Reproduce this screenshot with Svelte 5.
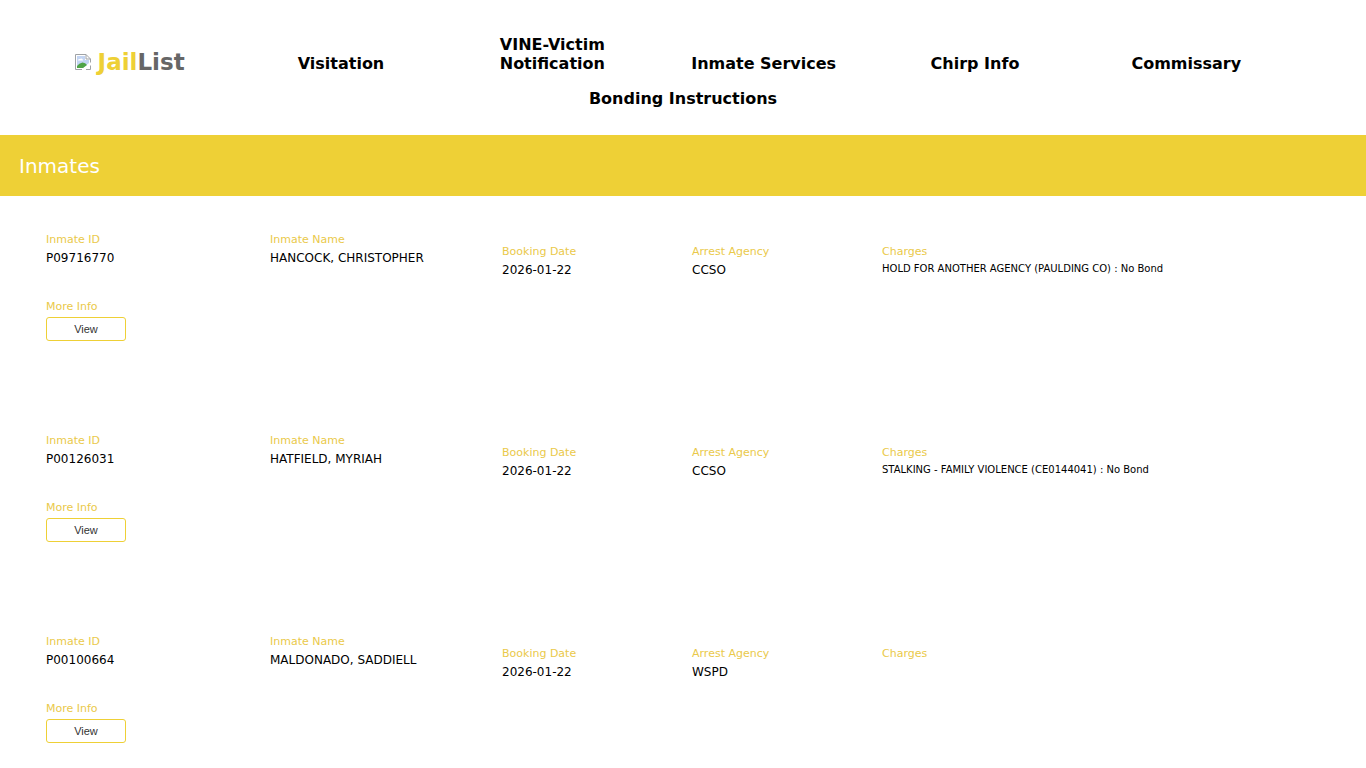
<script lang="ts">
  interface Inmate {
    id: string;
    name: string;
    booked: string;
    agency: string;
    charges: string;
  }

  const links = [
    "Visitation",
    "VINE-Victim Notification",
    "Inmate Services",
    "Chirp Info",
    "Commissary",
  ];

  const inmates: Inmate[] = [
    {
      id: "P09716770",
      name: "HANCOCK, CHRISTOPHER",
      booked: "2026-01-22",
      agency: "CCSO",
      charges: "HOLD FOR ANOTHER AGENCY (PAULDING CO) : No Bond",
    },
    {
      id: "P00126031",
      name: "HATFIELD, MYRIAH",
      booked: "2026-01-22",
      agency: "CCSO",
      charges: "STALKING - FAMILY VIOLENCE (CE0144041) : No Bond",
    },
    {
      id: "P00100664",
      name: "MALDONADO, SADDIELL",
      booked: "2026-01-22",
      agency: "WSPD",
      charges: "",
    },
  ];
</script>

<header>
  <nav>
    <div class="links">
      <a class="logo" href="#home">
        <svg width="16" height="16" viewBox="0 0 16 16" aria-hidden="true">
          <path d="M.5 .5H11L15.5 5V15.5H.5Z" fill="#fff" />
          <path d="M2 2H10V6H14V9L8 14H2Z" fill="#c3d5f3" />
          <path d="M3 6.5a1.5 1.5 0 0 1 2-1.5a1.8 1.8 0 0 1 3 1.5Z" fill="#fff" />
          <path d="M2 14V12Q4 9 7.5 8.500Q10.5 8.5 12 11L8 14Z" fill="#4fa447" />
          <path d="M7 16L16 8.5V11L10 16Z" fill="#fff" />
          <path
            d="M7 15.5H.5V.5H11L15.5 5V8.5M11 .5V5H15.5M15.5 11.5V15.5H11"
            fill="none"
            stroke="#a0a3a6"
          />
        </svg>
        <span class="brand"><span class="jail">Jail</span>List</span>
      </a>
      {#each links as link}
        <a href="#{link}">{link}</a>
      {/each}
    </div>
    <a class="bonding" href="#bonding">Bonding Instructions</a>
  </nav>
</header>

<h1>Inmates</h1>

<main>
  {#each inmates as inmate (inmate.id)}
    <section class="inmate">
      <div>
        <div class="label">Inmate ID</div>
        <div class="value">{inmate.id}</div>
      </div>
      <div>
        <div class="label">Inmate Name</div>
        <div class="value">{inmate.name}</div>
      </div>
      <div class="detail">
        <div class="label">Booking Date</div>
        <div class="value">{inmate.booked}</div>
      </div>
      <div class="detail">
        <div class="label">Arrest Agency</div>
        <div class="value">{inmate.agency}</div>
      </div>
      <div class="detail">
        <div class="label">Charges</div>
        <div class="charges">{inmate.charges}</div>
      </div>
      <div class="more">
        <label class="label" for="view-{inmate.id}">More Info</label>
        <button id="view-{inmate.id}" type="button">View</button>
      </div>
    </section>
  {/each}
</main>

<style>
  :global(body) {
    background: #fff;
    color: #000;
    font-family: Verdana, "DejaVu Sans", sans-serif;
    font-size: 12px;
  }

  nav {
    padding: 35px 0 27px;
    font-size: 16px;
    font-weight: bold;
    line-height: 19px;
    text-align: center;
  }

  nav a {
    color: #000;
    text-decoration: none;
  }

  .links {
    display: grid;
    grid-template-columns: repeat(6, 1fr);
    align-items: end;
    margin: 0 74px 16px 24px;
  }

  .links .logo {
    display: flex;
    align-items: center;
    justify-content: center;
    gap: 7px;
  }

  .brand {
    color: #666;
    font-size: 23px;
    line-height: 22px;
  }

  .jail {
    color: #eed036;
  }

  .bonding {
    display: block;
  }

  h1 {
    margin: 0;
    padding: 19px 19px 17px;
    background: #eed036;
    color: #fff;
    font-size: 20px;
    font-weight: normal;
    line-height: 25px;
  }

  main {
    padding: 37px 46px 0;
  }

  .inmate {
    display: grid;
    grid-template-columns: 224fr 232fr 190fr 190fr 438fr;
    row-gap: 22px;
    padding-bottom: 93px;
  }

  .detail {
    padding-top: 12px;
  }

  .label {
    display: block;
    color: #eac94a;
    font-size: 11px;
    line-height: 14px;
  }

  .value {
    margin-top: 3px;
    line-height: 16px;
  }

  .charges {
    margin-top: 3px;
    font-size: 10px;
    line-height: 14px;
  }

  .more {
    grid-column: 1;
  }

  button {
    display: block;
    width: 80px;
    height: 24px;
    margin-top: 3px;
    padding: 0;
    border: 1px solid #eed036;
    border-radius: 3px;
    background: #fff;
    color: #333;
    font-family: "Liberation Sans", Arial, sans-serif;
    font-size: 11px;
  }
</style>
